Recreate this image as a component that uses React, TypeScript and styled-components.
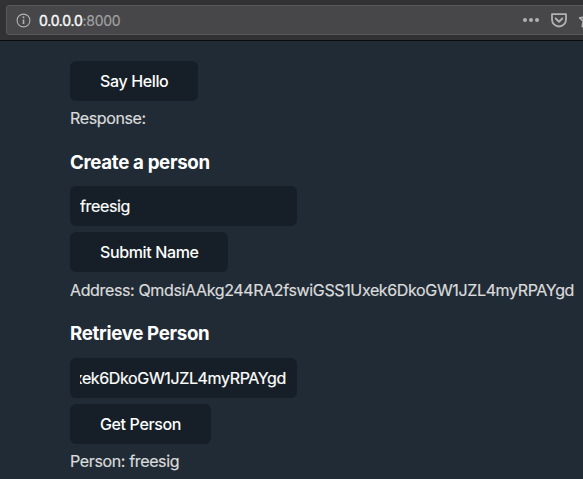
import React from 'react';
import styled, { createGlobalStyle } from 'styled-components';

const GlobalStyle = createGlobalStyle`
  * { box-sizing: border-box; }
  html, body { margin: 0; height: 100%; overflow: hidden; background: #202b36; }
  body { font-family: Inter, "Liberation Sans", sans-serif; }
`;

const Page = styled.div`
  height: 479px;
  overflow: hidden;
  background: #202b36;
`;

const BrowserBar = styled.header`
  height: 41px;
  padding: 5px 0 0 6px;
  background: #323234;
  border-bottom: 1px solid #0c0c0d;
  overflow: hidden;
`;

const AddressField = styled.div`
  display: flex;
  align-items: center;
  width: 640px;
  height: 30px;
  padding-left: 9px;
  background: #474749;
  border: 1px solid #58585a;
  border-radius: 3px;
  color: #b1b1b3;
`;

const Url = styled.div`
  width: 483px;
  margin-left: 8px;
  padding-top: 2px;
  font-size: 14px;
  line-height: 20px;
  letter-spacing: -0.26px;
  color: #a0a0a2;
  -webkit-text-stroke: 0.2px currentColor;
`;

const Host = styled.span`
  color: #f9f9fa;
  -webkit-text-stroke: 0.4px currentColor;
`;

const Actions = styled.div`
  display: flex;
  align-items: center;
  gap: 11px;
`;

const Content = styled.main`
  padding: 20px 0 0 70px;
`;

const Button = styled.button<{ $width: number }>`
  display: block;
  width: ${(p) => p.$width}px;
  height: 40px;
  padding: 0 0 0 30px;
  border: 0;
  border-radius: 6px;
  background: #161f27;
  color: #fff;
  font: 500 16px/40px Inter, sans-serif;
  letter-spacing: -0.37px;
  text-align: left;
  white-space: nowrap;
`;

const Result = styled.p<{ $tall?: boolean }>`
  height: ${(p) => (p.$tall ? 35 : 34)}px;
  margin: 0;
  color: #dbdbdb;
  font-size: 16px;
  line-height: ${(p) => (p.$tall ? 37 : 35)}px;
  letter-spacing: -0.36px;
  white-space: nowrap;
  -webkit-text-stroke: 0.2px currentColor;
`;

const Heading = styled.h3<{ $top?: number }>`
  height: 51px;
  margin: 0;
  padding-top: ${(p) => p.$top ?? 15}px;
  color: #fff;
  font-size: 18.7px;
  font-weight: 700;
  line-height: 26px;
  letter-spacing: -0.33px;
`;

const Field = styled.div`
  width: 227px;
  height: 40px;
  margin-bottom: 6px;
  padding: 0 10px;
  border-radius: 6px;
  background: #161f27;
  color: #fff;
  font-size: 16px;
  line-height: 40px;
  letter-spacing: -0.36px;
  -webkit-text-stroke: 0.2px currentColor;
`;

const Value = styled.span<{ $end?: boolean }>`
  display: flex;
  width: 100%;
  justify-content: ${(p) => (p.$end ? 'flex-end' : 'flex-start')};
  padding-right: ${(p) => (p.$end ? 1 : 0)}px;
  overflow: hidden;
  white-space: nowrap;
`;

const address = 'QmdsiAAkg244RA2fswiGSS1Uxek6DkoGW1JZL4myRPAYgd';

const InfoIcon = () => (
  <svg width="15" height="15" viewBox="0 0 15 15" fill="none">
    <circle cx="7.5" cy="7.5" r="6.4" stroke="currentColor" strokeWidth="1.1" />
    <path d="M7.5 6.5v4.5" stroke="currentColor" strokeWidth="1.6" />
    <circle cx="7.5" cy="4.2" r="1" fill="currentColor" />
  </svg>
);

const MoreIcon = () => (
  <svg width="18" height="6" viewBox="0 0 18 6" fill="currentColor">
    <circle cx="3" cy="3" r="2" />
    <circle cx="9" cy="3" r="2" />
    <circle cx="15" cy="3" r="2" />
  </svg>
);

const PocketIcon = () => (
  <svg width="16" height="15" viewBox="0 0 16 15" fill="none" stroke="currentColor" strokeLinejoin="round">
    <path d="M1 1.2h14v5.3a7 7 0 0 1-14 0z" strokeWidth="1.8" />
    <path d="M4.7 5.5L8 8.7l3.3-3.2" strokeWidth="1.9" strokeLinecap="round" />
  </svg>
);

const StarIcon = () => (
  <svg width="16" height="16" viewBox="0 0 16 16" fill="none" stroke="currentColor" strokeLinejoin="round">
    <path d="M8.5 1l2 4.3 4.8.6-3.5 3.3.9 5.3-4.2-2.6-4.2 2.6.9-5.3-3.5-3.3 4.8-.6z" strokeWidth="1.8" />
  </svg>
);

export default function App() {
  return (
    <Page>
      <GlobalStyle />
      <BrowserBar>
        <AddressField>
          <InfoIcon />
          <Url><Host>0.0.0.0</Host>:8000</Url>
          <Actions><MoreIcon /><PocketIcon /><StarIcon /></Actions>
        </AddressField>
      </BrowserBar>
      <Content>
        <Button $width={128}>Say Hello</Button>
        <Result>Response:</Result>
        <Heading>Create a person</Heading>
        <Field><Value>freesig</Value></Field>
        <Button $width={158}>Submit Name</Button>
        <Result $tall>Address: {address}</Result>
        <Heading $top={14}>Retrieve Person</Heading>
        <Field><Value $end>{address}</Value></Field>
        <Button $width={141}>Get Person</Button>
        <Result>Person: freesig</Result>
      </Content>
    </Page>
  );
}
